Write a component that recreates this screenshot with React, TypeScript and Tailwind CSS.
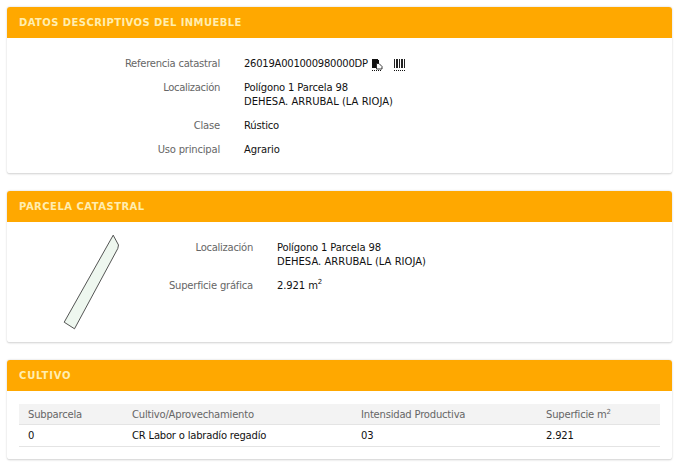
function Card({ title, children, className, titleClass = 'tracking-[0.42px]' }: { title: string; children: React.ReactNode; className: string; titleClass?: string }) {
  return (
    <section className={`overflow-hidden rounded-[3px] border-b border-[#ddd] bg-white shadow-[0_0_2px_rgba(0,0,0,0.22)] ${className}`}>
      <h2 className={`flex h-[31px] items-center bg-[#ffa800] pl-3 font-bold text-[#ffeeb0] ${titleClass}`}>{title}</h2>
      {children}
    </section>
  );
}

function Row({ label, children, labelWidth, labelClass = 'tracking-[-0.2px]' }: { label: string; children: React.ReactNode; labelWidth: string; labelClass?: string }) {
  return (
    <div className="flex gap-6">
      <div className={`${labelWidth} text-right text-[#666] ${labelClass}`}>{label}</div>
      <div className="text-[#111]">{children}</div>
    </div>
  );
}

function Address() {
  return (
    <>
      <p className="tracking-[-0.15px]">Polígono 1 Parcela 98</p>
      <p className="tracking-normal">DEHESA. ARRUBAL (LA RIOJA)</p>
    </>
  );
}

function CopyIcon() {
  return (
    <svg width="12" height="14" viewBox="0 0 12 14" className="ml-[3px]">
      <path d="M1 2h6v1h1v8H1z" fill="#111" />
      <path d="M5.5 6.5h2.5l3 3v2.5H5.5z" fill="#fff" stroke="#222" strokeWidth="0.9" />
      <path d="M1 13.5h10" stroke="#111" strokeDasharray="1 1" />
    </svg>
  );
}

function BarcodeIcon() {
  return (
    <svg width="11" height="14" viewBox="0 0 11 14" className="ml-[11px]">
      <path d="M.5 2v9M2.5 2v9M3.5 2v9M5.5 2v9M7.5 2v9M8.5 2v9M10.5 2v9" stroke="#222" />
      <path d="M0 13.5h11" stroke="#111" strokeDasharray="1 1" />
    </svg>
  );
}

function ParcelShape() {
  return (
    <svg width="62" height="98" viewBox="0 0 62 98" className="shrink-0">
      <path d="M53.2 3.2 58.5 13 57.8 16.5 14.5 96.8 4.2 90.2z" fill="#eef7ef" stroke="#2a2a2a" strokeWidth="0.8" strokeLinejoin="round" />
    </svg>
  );
}

export default function App() {
  return (
    <div className="h-[465px] w-[682px] overflow-hidden bg-white pl-[7px] pr-[10px] pt-[7px] font-['DejaVu_Sans',Verdana,sans-serif] text-[10px] leading-[14px]">
      <Card title="DATOS DESCRIPTIVOS DEL INMUEBLE" className="h-[167px]">
        <div className="flex flex-col gap-[10px] pt-[19px]">
          <Row label="Referencia catastral" labelWidth="w-[213px]" labelClass="tracking-[-0.25px]">
            <div className="flex items-center tracking-[-0.25px]">
              26019A001000980000DP
              <CopyIcon />
              <BarcodeIcon />
            </div>
          </Row>
          <Row label="Localización" labelWidth="w-[213px]" labelClass="tracking-[-0.33px]">
            <Address />
          </Row>
          <Row label="Clase" labelWidth="w-[213px]"><span className="tracking-[-0.2px]">Rústico</span></Row>
          <Row label="Uso principal" labelWidth="w-[213px]"><span className="tracking-[-0.1px]">Agrario</span></Row>
        </div>
      </Card>

      <Card title="PARCELA CATASTRAL" className="mt-[17px] h-[152px]" titleClass="tracking-[0.48px]">
        <div className="flex pl-[53px] pt-[10px]">
          <ParcelShape />
          <div className="-ml-[115px] flex flex-col gap-[10px] pt-[9px]">
            <Row label="Localización" labelWidth="w-[246px]" labelClass="tracking-[-0.28px]">
              <Address />
            </Row>
            <Row label="Superficie gráfica" labelWidth="w-[246px]">
              <span className="tracking-[-0.1px]">2.921 m<sup className="-top-[5px] text-[7px] leading-none">2</sup></span>
            </Row>
          </div>
        </div>
      </Card>

      <Card title="CULTIVO" className="mt-[17px] h-[100px]" titleClass="tracking-[0.8px]">
        <div className="mx-3 mt-[13px] tracking-[-0.2px]">
          <div className="grid h-[21px] grid-cols-[104px_229px_185px_1fr] items-center border-b border-[#e4e4e4] bg-[#f3f3f3] pl-[9px] pt-px text-[#666]">
            <div>Subparcela</div>
            <div>Cultivo/Aprovechamiento</div>
            <div>Intensidad Productiva</div>
            <div>Superficie m<sup className="-top-[4px] text-[7px] leading-none">2</sup></div>
          </div>
          <div className="grid h-[22px] grid-cols-[104px_229px_185px_1fr] items-center border-b border-[#e4e4e4] pl-[9px] pt-px text-[#111]">
            <div>0</div>
            <div>CR Labor o labradío regadío</div>
            <div>03</div>
            <div>2.921</div>
          </div>
        </div>
      </Card>
    </div>
  );
}
